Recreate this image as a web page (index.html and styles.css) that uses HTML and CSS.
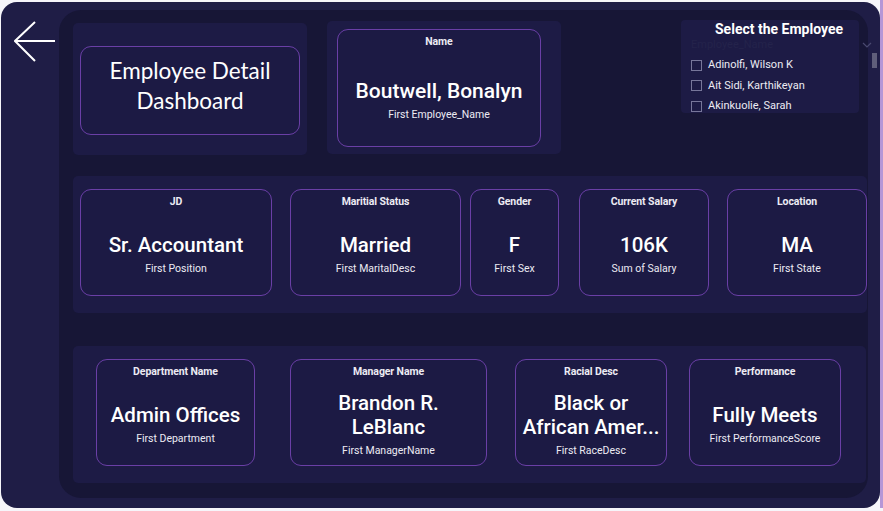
FILE: index.html
```html
<!DOCTYPE html>
<html>
<head>
<meta charset="utf-8">
<link rel="stylesheet" href="styles.css">
</head>
<body>
<div class="screen">
  <div class="frame">
    <div class="back">
      <svg width="44" height="44" viewBox="0 0 44 44"><polyline points="21,2 1,21 21,41" fill="none" stroke="#fff" stroke-width="2"/><line x1="1" y1="21" x2="41" y2="21" stroke="#fff" stroke-width="2"/></svg>
    </div>
    <div class="canvas">
      <div class="row1">
        <div class="sec sec-title">
          <div class="card title-card">Employee Detail<br>Dashboard</div>
        </div>
        <div class="sec sec-name">
          <div class="card name-card">
            <div class="lbl">Name</div>
            <div class="body">
              <div class="val big">Boutwell, Bonalyn</div>
              <div class="sub">First Employee_Name</div>
            </div>
          </div>
        </div>
        <div class="slicer">
          <div class="sl-title">Select the Employee</div>
          <div class="sl-head">Employee_Name</div>
          <div class="sl-item"><span class="cb"></span>Adinolfi, Wilson K</div>
          <div class="sl-item"><span class="cb"></span>Ait Sidi, Karthikeyan</div>
          <div class="sl-item"><span class="cb"></span>Akinkuolie, Sarah</div>
        </div>
      </div>
      <div class="sec row2">
        <div class="card c-jd"><div class="lbl">JD</div><div class="body"><div class="val">Sr. Accountant</div><div class="sub">First Position</div></div></div>
        <div class="card c-ms"><div class="lbl">Maritial Status</div><div class="body"><div class="val">Married</div><div class="sub">First MaritalDesc</div></div></div>
        <div class="card c-g"><div class="lbl">Gender</div><div class="body"><div class="val">F</div><div class="sub">First Sex</div></div></div>
        <div class="card c-s"><div class="lbl">Current Salary</div><div class="body"><div class="val">106K</div><div class="sub">Sum of Salary</div></div></div>
        <div class="card c-l"><div class="lbl">Location</div><div class="body"><div class="val">MA</div><div class="sub">First State</div></div></div>
      </div>
      <div class="sec row3">
        <div class="card c-d"><div class="lbl">Department Name</div><div class="body"><div class="val">Admin Offices</div><div class="sub">First Department</div></div></div>
        <div class="card c-m"><div class="lbl">Manager Name</div><div class="body"><div class="val">Brandon R.<br>LeBlanc</div><div class="sub">First ManagerName</div></div></div>
        <div class="card c-r"><div class="lbl">Racial Desc</div><div class="body"><div class="val">Black or<br>African Amer...</div><div class="sub">First RaceDesc</div></div></div>
        <div class="card c-p"><div class="lbl">Performance</div><div class="body"><div class="val">Fully Meets</div><div class="sub">First PerformanceScore</div></div></div>
      </div>
    </div>
    <div class="chev"><svg width="10" height="6" viewBox="0 0 10 6"><polyline points="1,1 5,5 9,1" fill="none" stroke="#4a4970" stroke-width="1.2"/></svg></div>
    <div class="scroll"></div>
  </div>
  <div class="edge"></div>
</div>
</body>
</html>
```
FILE: styles.css
```css
html, body { margin: 0; padding: 0; }
body {
  background: #f6f5fa;
  font-family: Roboto, "Liberation Sans", sans-serif;
  color: #fff;
  width: 883px;
  height: 511px;
  overflow: hidden;
}
.screen { display: flex; align-items: flex-start; }
.frame {
  position: relative;
  margin-top: 2px;
  margin-left: 1px;
  width: 879px;
  height: 506px;
  background: #1f1d46;
  border-radius: 16px;
  display: flex;
  align-items: flex-start;
}
.edge {
  width: 3px;
  height: 508px;
  background: #b596d6;
}
.back {
  width: 58px;
  padding: 18px 0 0 13px;
  box-sizing: border-box;
}
.back svg { display: block; }
.canvas {
  margin-top: 8px;
  width: 809px;
  height: 488px;
  box-sizing: border-box;
  background: #171636;
  border-radius: 22px;
  padding: 10px 0 0 14px;
  display: flex;
  flex-direction: column;
}
.row1 { display: flex; align-items: flex-start; height: 135px; }
.sec { background: #1d1b45; border-radius: 5px; box-sizing: border-box; }
.sec-title {
  margin-top: 3px;
  width: 234px;
  height: 132px;
  padding: 23px 7px 0 7px;
}
.card {
  border: 1px solid #6a3fa6;
  border-radius: 11px;
  box-sizing: border-box;
  background: #1c1a44;
  display: flex;
  flex-direction: column;
  align-items: center;
}
.title-card {
  height: 89px;
  justify-content: center;
  text-align: center;
  font-family: Lato, "Open Sans", sans-serif;
  font-size: 22.5px;
  line-height: 30px;
  color: #fff;
  padding-bottom: 9px;
}
.sec-name {
  margin-top: 1px;
  margin-left: 20px;
  width: 234px;
  height: 133px;
  padding: 8px 0 0 10px;
}
.name-card { width: 204px; height: 118px; }
.lbl {
  margin-top: 5px;
  font-size: 10.5px;
  font-weight: 700;
  line-height: 13px;
  color: #ecebf3;
  letter-spacing: -0.1px;
}
.body {
  flex: 1;
  display: flex;
  flex-direction: column;
  align-items: center;
  justify-content: center;
  padding-top: 5px;
  text-align: center;
}
.name-card .body { padding-top: 7px; }
.val {
  font-size: 20.5px;
  line-height: 24px;
  font-weight: 500;
  color: #fff;
  white-space: nowrap;
}
.val.big { font-size: 21px; }
.sub {
  margin-top: 5px;
  font-size: 10.5px;
  line-height: 14px;
  color: #ecebf3;
}
.slicer {
  margin-left: 120px;
  width: 178px;
  height: 93px;
  background: #1d1b45;
  border-radius: 4px;
  overflow: hidden;
  box-sizing: border-box;
  padding: 1px 0 0 10px;
}
.sl-title {
  padding-left: 24px;
  font-size: 14px;
  font-weight: 700;
  line-height: 17px;
  color: #fff;
}
.sl-head {
  font-size: 11px;
  line-height: 14px;
  color: #24234b;
  margin-bottom: 3px;
}
.sl-item {
  display: flex;
  align-items: center;
  font-size: 11px;
  line-height: 20.5px;
  height: 20.5px;
  color: #ecebf3;
}
.cb {
  width: 9px;
  height: 9px;
  border: 1px solid #77769a;
  margin-right: 6px;
  flex: none;
}
.row2 {
  margin-top: 21px;
  width: 794px;
  height: 137px;
  padding: 13px 0 0 7px;
  display: flex;
  align-items: flex-start;
}
.row2 .card, .row3 .card { height: 107px; }
.c-jd { width: 192px; }
.c-ms { width: 171px; margin-left: 18px; }
.c-g { width: 89px; margin-left: 9px; }
.c-s { width: 130px; margin-left: 20px; }
.c-l { width: 140px; margin-left: 18px; }
.row3 {
  margin-top: 33px;
  width: 793px;
  height: 137px;
  padding: 13px 0 0 23px;
  display: flex;
  align-items: flex-start;
}
.c-d { width: 159px; }
.c-m { width: 197px; margin-left: 35px; }
.c-r { width: 152px; margin-left: 28px; }
.c-p { width: 152px; margin-left: 22px; }
.chev { position: absolute; left: 861px; top: 40px; }
.chev svg { display: block; }
.scroll {
  position: absolute;
  left: 871px;
  top: 51px;
  width: 5px;
  height: 15px;
  background: #5f5e7a;
}
```
